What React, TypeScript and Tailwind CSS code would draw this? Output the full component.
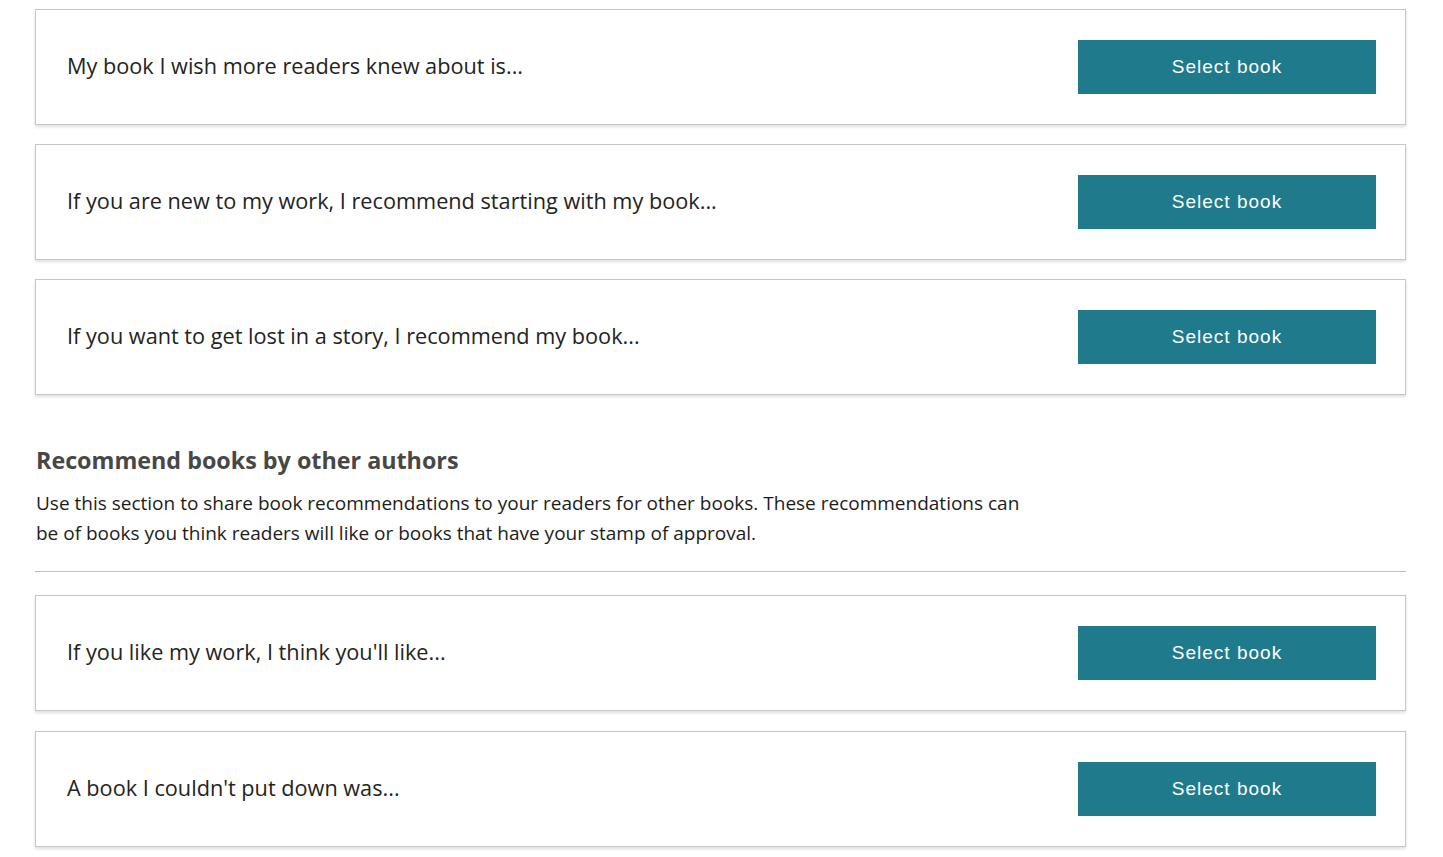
const ownBooks = [
  "My book I wish more readers knew about is...",
  "If you are new to my work, I recommend starting with my book...",
  "If you want to get lost in a story, I recommend my book...",
];

const otherBooks = [
  "If you like my work, I think you'll like...",
  "A book I couldn't put down was...",
];

function PromptCard({ prompt }: { prompt: string }) {
  return (
    <div className="flex items-center justify-between border border-[#c6c6c6] bg-white py-[30px] pl-[31px] pr-[29px] shadow-[0_2px_3px_rgba(0,0,0,0.13)]">
      <p className="text-[21.7px] leading-[30px] text-[#232323] -mt-[2px]">{prompt}</p>
      <button className="h-[54px] w-[298px] bg-[#1f7a8c] text-[19px] tracking-[1px] text-white font-['Liberation_Sans',Arial,sans-serif]">
        Select book
      </button>
    </div>
  );
}

export default function App() {
  return (
    <div className="min-h-screen bg-white pl-[35px] pr-[37px] pt-[9px] pb-[10px] font-['Open_Sans',sans-serif]">
      <div className="flex flex-col gap-[19px]">
        {ownBooks.map((prompt, idx) => (
          <PromptCard key={idx} prompt={prompt} />
        ))}
      </div>

      <div className="mt-[49px] pl-[1px]">
        <h2 className="text-[23.3px] font-bold leading-[32px] text-[#474747]">
          Recommend books by other authors
        </h2>
        <p className="mt-[12px] max-w-[1005px] text-[19px] leading-[30px] text-[#1c1c1c]">
          Use this section to share book recommendations to your readers for
          other books. These recommendations can be of books you think readers
          will like or books that have your stamp of approval.
        </p>
      </div>

      <hr className="mt-[23px] border-t border-[#bdbdbd]" />

      <div className="mt-[23px] flex flex-col gap-[20px]">
        {otherBooks.map((prompt, idx) => (
          <PromptCard key={idx} prompt={prompt} />
        ))}
      </div>
    </div>
  );
}
